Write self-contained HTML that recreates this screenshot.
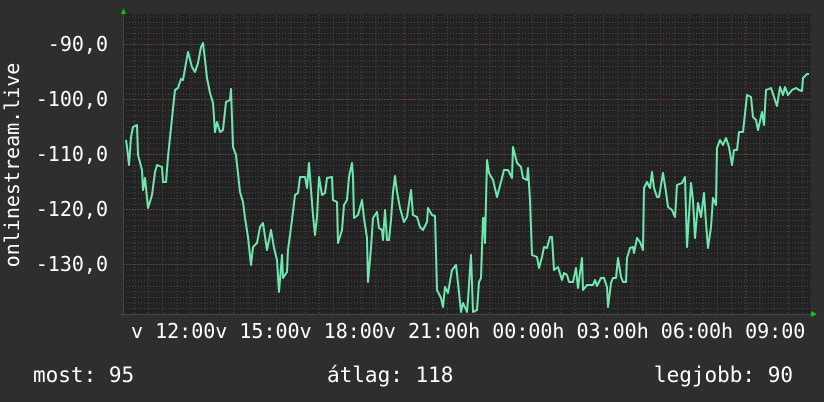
<!DOCTYPE html>
<html><head><meta charset="utf-8"><style>
html,body{margin:0;padding:0;background:#2e2e2e;}
svg{display:block}
text{font-family:"DejaVu Sans Mono","Liberation Mono",monospace;font-size:20px;fill:#fff}
text.lg{font-size:21px}
</style></head><body>
<svg width="824" height="402" viewBox="0 0 824 402" xmlns="http://www.w3.org/2000/svg">
<defs>
<pattern id="hm" patternUnits="userSpaceOnUse" x="0" y="16.5" width="824" height="5.5">
<line x1="0" y1="0.5" x2="824" y2="0.5" stroke="#4a4a4a" stroke-width="1" stroke-dasharray="1,2"/>
</pattern>
<pattern id="vm" patternUnits="userSpaceOnUse" x="133.78" y="0" width="14.222" height="402">
<line x1="0.5" y1="0" x2="0.5" y2="402" stroke="#4a4a4a" stroke-width="1" stroke-dasharray="1,2"/>
</pattern>
<pattern id="vM" patternUnits="userSpaceOnUse" x="148" y="0" width="85.333" height="402">
<line x1="0.5" y1="0" x2="0.5" y2="402" stroke="#6e3a3a" stroke-width="1" stroke-dasharray="1,2"/>
</pattern>
</defs>
<rect x="0" y="0" width="824" height="402" fill="#2e2e2e"/>
<rect x="123" y="14" width="688" height="300" fill="#222"/>
<rect x="124" y="14" width="687" height="300" fill="url(#hm)"/>
<rect x="124" y="14" width="687" height="300" fill="url(#vm)"/>
<rect x="124" y="14" width="687" height="300" fill="url(#vM)"/>
<g stroke="#6e3a3a" stroke-width="1" stroke-dasharray="1,2">
<line x1="124" y1="44.5" x2="811" y2="44.5"/>
<line x1="124" y1="99.5" x2="811" y2="99.5"/>
<line x1="124" y1="154.5" x2="811" y2="154.5"/>
<line x1="124" y1="209.5" x2="811" y2="209.5"/>
<line x1="124" y1="264.5" x2="811" y2="264.5"/>
</g>
<line x1="120" y1="314.5" x2="812" y2="314.5" stroke="#444" stroke-width="1"/>
<line x1="123.5" y1="12" x2="123.5" y2="317" stroke="#444" stroke-width="1"/>
<polygon points="121,14 126,14 123.5,8" fill="#0c0"/>
<polygon points="811,311 811,317 817,314" fill="#0c0"/>
<polyline fill="none" stroke="#6fe8b0" stroke-width="2" stroke-linejoin="round" points="
126,140 127,147 129,165 131,137 133,127 137,125 138,155 142,170 143,190 145,178 148,208 152,195 155,172 157,165 162,167 163,182 166,182 168,157 171,128 172,118 175,90 178,88 181,79 183,80 186,63 188,52 192,67 195,72 198,63 201,47 203,43 205,60 207,78 210,93 213,103 215,132 217,122 220,132 223,130 226,102 230,100 231,89 233,147 236,155 240,192 243,202 245,218 248,237 251,265 253,247 257,243 260,227 263,223 267,250 271,230 274,248 277,260 279,292 282,255 283,278 287,272 288,250 292,220 295,195 298,193 300,177 305,177 307,188 309,163 311,190 313,215 315,235 317,217 319,177 322,195 325,193 327,178 332,177 333,200 337,202 338,243 342,230 344,205 347,200 349,177 352,163 353,177 354,218 358,215 362,200 364,218 367,238 368,282 371,248 373,218 377,212 379,228 382,230 383,240 385,210 387,240 389,240 391,220 393,192 395,176 397,192 400,208 404,222 407,217 411,190 413,215 417,217 420,227 423,230 427,222 428,208 432,215 435,216 437,290 441,298 443,307 445,287 448,293 452,270 456,265 458,283 461,312 463,303 467,312 468,300 471,255 473,312 477,310 479,282 481,278 483,218 484,218 485,243 487,160 489,173 493,180 497,197 502,178 504,170 508,170 512,178 513,147 517,163 521,167 523,178 527,180 528,168 530,200 532,255 537,257 539,268 542,257 544,247 547,248 550,237 552,237 554,270 558,267 562,280 564,273 567,275 569,282 573,282 576,268 578,288 582,258 583,290 587,285 593,285 595,280 597,286 601,278 604,278 607,287 608,307 611,283 613,278 616,278 618,258 621,277 623,282 626,282 627,258 630,248 633,247 634,253 637,238 640,242 643,250 644,188 647,182 650,188 652,172 654,188 657,197 659,197 663,173 666,192 668,207 672,210 675,217 677,185 682,183 685,177 687,247 691,183 693,200 695,238 698,203 701,217 704,193 706,223 708,248 711,227 713,198 716,205 717,148 720,140 723,145 726,138 729,147 732,165 734,150 737,150 739,132 743,132 747,95 751,97 753,117 756,120 758,130 762,112 764,125 766,90 771,88 774,97 777,106 780,87 783,95 785,87 788,95 792,90 796,88 799,90 802,91 803,78 807,74 809,74"/>
<g text-anchor="end">
<text x="108" y="51">-90,0</text>
<text x="108" y="106">-100,0</text>
<text x="108" y="161">-110,0</text>
<text x="108" y="216">-120,0</text>
<text x="108" y="271">-130,0</text>
</g>
<text transform="translate(19,165) rotate(-90)" text-anchor="middle">onlinestream.live</text>
<text x="131" y="338" xml:space="preserve">v 12:00v 15:00v 18:00v 21:00h 00:00h 03:00h 06:00h 09:00</text>
<text class="lg" x="33" y="382">most: 95</text>
<text class="lg" x="327" y="382">átlag: 118</text>
<text class="lg" x="793" y="382" text-anchor="end">legjobb: 90</text>
</svg>
</body></html>
